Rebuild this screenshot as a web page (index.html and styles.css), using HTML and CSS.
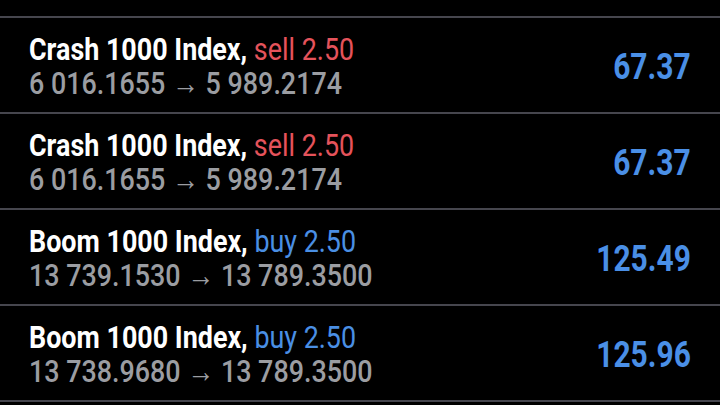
FILE: index.html
```html
<!DOCTYPE html>
<html lang="en">
<head>
    <meta charset="UTF-8">
    <meta name="viewport" content="width=device-width, initial-scale=1.0">
    <title>History</title>
    <link rel="stylesheet" href="styles.css">
</head>
<body>
    <div class="deals">
        <div class="deal">
            <div class="deal-info">
                <div class="deal-title">Crash 1000 Index, <span class="sell">sell 2.50</span></div>
                <div class="deal-prices">6 016.1655 &rarr; 5 989.2174</div>
            </div>
            <div class="deal-profit">67.37</div>
        </div>
        <div class="deal">
            <div class="deal-info">
                <div class="deal-title">Crash 1000 Index, <span class="sell">sell 2.50</span></div>
                <div class="deal-prices">6 016.1655 &rarr; 5 989.2174</div>
            </div>
            <div class="deal-profit">67.37</div>
        </div>
        <div class="deal">
            <div class="deal-info">
                <div class="deal-title">Boom 1000 Index, <span class="buy">buy 2.50</span></div>
                <div class="deal-prices">13 739.1530 &rarr; 13 789.3500</div>
            </div>
            <div class="deal-profit">125.49</div>
        </div>
        <div class="deal">
            <div class="deal-info">
                <div class="deal-title">Boom 1000 Index, <span class="buy">buy 2.50</span></div>
                <div class="deal-prices">13 738.9680 &rarr; 13 789.3500</div>
            </div>
            <div class="deal-profit">125.96</div>
        </div>
    </div>
</body>
</html>
```

FILE: styles.css
```css
body {
    margin: 0;
    background: #000;
    font-family: Roboto, "Noto Sans", sans-serif;
    overflow: hidden;
}
.deals {
    padding-top: 16px;
}
.deal {
    display: flex;
    align-items: center;
    justify-content: space-between;
    height: 94px;
    padding: 0 29px;
    border-top: 2px solid #46464e;
}
.deal:last-child {
    border-bottom: 2px solid #46464e;
}
.deal-info {
    margin-top: 2px;
    transform: scaleX(0.84);
    transform-origin: left center;
    white-space: nowrap;
}
.deal-title {
    font-size: 32px;
    line-height: 34px;
    font-weight: 700;
    color: #fff;
}
.sell {
    font-weight: 400;
    color: #e5535b;
}
.buy {
    font-weight: 400;
    color: #4a8fe4;
}
.deal-prices {
    font-size: 32px;
    line-height: 34px;
    font-weight: 500;
    color: #9b9da2;
}
.deal-profit {
    padding-top: 3px;
    font-size: 37px;
    line-height: 40px;
    font-weight: 700;
    color: #4a8fe6;
    transform: scaleX(0.81);
    transform-origin: right center;
}
```
